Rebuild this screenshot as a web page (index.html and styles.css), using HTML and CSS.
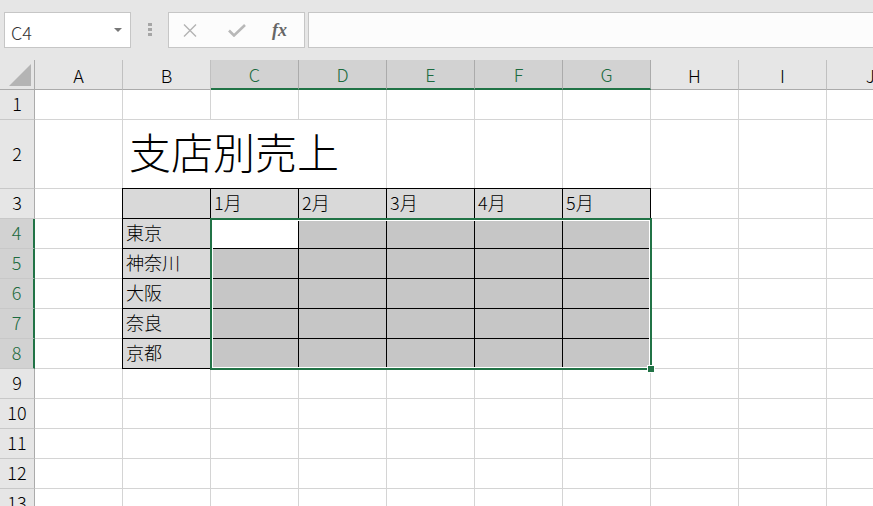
FILE: index.html
```html
<!DOCTYPE html>
<html lang="ja">
<head>
<meta charset="utf-8">
<title>支店別売上 - Excel</title>
<link rel="stylesheet" href="styles.css">
</head>
<body>
	<div class="toolbar">
		<div class="name-box">
			<span class="name">C4</span>
			<span class="dropdown"></span>
		</div>
		<div class="grip"><i></i><i></i><i></i></div>
		<div class="fx-buttons">
			<svg class="btn-cancel" width="14" height="13" viewBox="0 0 14 13">
				<path d="M1 0.5 L13 12.5 M13 0.5 L1 12.5" stroke="#b3b3b3" stroke-width="1.4" fill="none"/>
			</svg>
			<svg class="btn-enter" width="18" height="13" viewBox="0 0 18 13">
				<path d="M1 6.5 L6 11.5 L17 1" stroke="#b8b8b8" stroke-width="2.6" fill="none"/>
			</svg>
			<span class="fx">fx</span>
		</div>
		<div class="formula-input"></div>
	</div>

	<div class="sheet">
		<!-- header row -->
		<div class="corner">
			<svg width="22" height="22" viewBox="0 0 22 22"><path d="M0 22 L22 0 L22 22 Z" fill="#b4b4b4"/></svg>
		</div>
		<div class="col-head">A</div>
		<div class="col-head">B</div>
		<div class="col-head sel">C</div>
		<div class="col-head sel">D</div>
		<div class="col-head sel">E</div>
		<div class="col-head sel">F</div>
		<div class="col-head sel">G</div>
		<div class="col-head">H</div>
		<div class="col-head">I</div>
		<div class="col-head">J</div>

		<!-- row 1 -->
		<div class="row-head">1</div>
		<div class="cell"></div><div class="cell"></div><div class="cell"></div><div class="cell"></div><div class="cell"></div>
		<div class="cell"></div><div class="cell"></div><div class="cell"></div><div class="cell"></div><div class="cell"></div>

		<!-- row 2 -->
		<div class="row-head">2</div>
		<div class="cell"></div>
		<div class="cell title">支店別売上</div>
		<div class="cell"></div><div class="cell"></div><div class="cell"></div><div class="cell"></div><div class="cell"></div><div class="cell"></div>

		<!-- rows 3-8, B:G is the table block -->
		<div class="row-head">3</div>
		<div class="cell"></div><div class="cell"></div><div class="cell"></div><div class="cell"></div>
		<div class="row-head sel">4</div>
		<div class="cell"></div><div class="cell"></div><div class="cell"></div><div class="cell"></div>
		<div class="row-head sel">5</div>
		<div class="cell"></div><div class="cell"></div><div class="cell"></div><div class="cell"></div>
		<div class="row-head sel">6</div>
		<div class="cell"></div><div class="cell"></div><div class="cell"></div><div class="cell"></div>
		<div class="row-head sel">7</div>
		<div class="cell"></div><div class="cell"></div><div class="cell"></div><div class="cell"></div>
		<div class="row-head sel">8</div>
		<div class="cell"></div><div class="cell"></div><div class="cell"></div><div class="cell"></div>

		<div class="range">
			<div class="hd"></div><div class="hd">1月</div><div class="hd">2月</div><div class="hd">3月</div><div class="hd">4月</div><div class="hd">5月</div>
			<div class="hd">東京</div><div class="active"></div><div class="sh"></div><div class="sh"></div><div class="sh"></div><div class="sh"></div>
			<div class="hd">神奈川</div><div class="sh"></div><div class="sh"></div><div class="sh"></div><div class="sh"></div><div class="sh"></div>
			<div class="hd">大阪</div><div class="sh"></div><div class="sh"></div><div class="sh"></div><div class="sh"></div><div class="sh"></div>
			<div class="hd">奈良</div><div class="sh"></div><div class="sh"></div><div class="sh"></div><div class="sh"></div><div class="sh"></div>
			<div class="hd">京都</div><div class="sh"></div><div class="sh"></div><div class="sh"></div><div class="sh"></div><div class="sh"></div>
		</div>

		<!-- rows 9-13 -->
		<div class="row-head">9</div>
		<div class="cell"></div><div class="cell"></div><div class="cell"></div><div class="cell"></div><div class="cell"></div>
		<div class="cell"></div><div class="cell"></div><div class="cell"></div><div class="cell"></div><div class="cell"></div>
		<div class="row-head">10</div>
		<div class="cell"></div><div class="cell"></div><div class="cell"></div><div class="cell"></div><div class="cell"></div>
		<div class="cell"></div><div class="cell"></div><div class="cell"></div><div class="cell"></div><div class="cell"></div>
		<div class="row-head">11</div>
		<div class="cell"></div><div class="cell"></div><div class="cell"></div><div class="cell"></div><div class="cell"></div>
		<div class="cell"></div><div class="cell"></div><div class="cell"></div><div class="cell"></div><div class="cell"></div>
		<div class="row-head">12</div>
		<div class="cell"></div><div class="cell"></div><div class="cell"></div><div class="cell"></div><div class="cell"></div>
		<div class="cell"></div><div class="cell"></div><div class="cell"></div><div class="cell"></div><div class="cell"></div>
		<div class="row-head">13</div>
		<div class="cell"></div><div class="cell"></div><div class="cell"></div><div class="cell"></div><div class="cell"></div>
		<div class="cell"></div><div class="cell"></div><div class="cell"></div><div class="cell"></div><div class="cell"></div>

		<!-- selection frame over C4:G8 -->
		<div class="selection"><div class="handle"></div></div>
	</div>
</body>
</html>
```

FILE: styles.css
```css
body {
	margin: 0;
	width: 873px;
	height: 506px;
	overflow: hidden;
	background-color: #e6e6e6;
	font-family: "Noto Sans CJK JP", "Noto Sans", sans-serif;
	font-weight: 300;
	color: #000;
}

/* formula bar */
.toolbar {
	height: 60px;
	box-sizing: border-box;
	padding: 12px 0 0 4px;
	display: flex;
	align-items: flex-start;
}

.name-box {
	width: 127px;
	height: 36px;
	box-sizing: border-box;
	background-color: #fff;
	border: 1px solid #c6c6c6;
	display: flex;
	align-items: center;
	justify-content: space-between;
	padding: 0 8px 0 6px;
}

.name {
	font-size: 18px;
	line-height: 1;
	color: #333;
	padding-top: 3px;
}

.dropdown {
	width: 0;
	height: 0;
	border-top: 4px solid #777;
	border-left: 4px solid transparent;
	border-right: 4px solid transparent;
}

.grip {
	margin: 11px 0 0 17px;
	width: 4px;
	display: flex;
	flex-direction: column;
	gap: 2px;
}

.grip i {
	display: block;
	width: 4px;
	height: 3px;
	background-color: #a6a6a6;
}

.fx-buttons {
	margin-left: 16px;
	width: 137px;
	height: 36px;
	box-sizing: border-box;
	background-color: #fcfcfc;
	border: 1px solid #c6c6c6;
	display: flex;
	align-items: center;
	padding-left: 14px;
}

.btn-cancel {
	display: block;
}

.btn-enter {
	display: block;
	margin-left: 31px;
}

.fx {
	margin-left: 26px;
	font-family: "Liberation Serif", serif;
	font-style: italic;
	font-weight: bold;
	font-size: 18px;
	color: #666;
	line-height: 1;
}

.formula-input {
	flex: 1;
	margin: 0 -2px 0 3px;
	height: 36px;
	box-sizing: border-box;
	background-color: #fcfcfc;
	border: 1px solid #c6c6c6;
}

/* worksheet */
.sheet {
	position: relative;
	display: grid;
	grid-template-columns: 35px repeat(10, 88px);
	grid-template-rows: 30px 30px 69px;
	grid-auto-rows: 30px;
	width: max-content;
	background-color: #fff;
}

.sheet > div {
	box-sizing: border-box;
}

.corner {
	background-color: #e6e6e6;
	border-right: 1px solid #ababab;
	border-bottom: 1px solid #ababab;
	padding: 4px 0 0 9px;
}

.corner svg {
	display: block;
}

.col-head {
	background-color: #e6e6e6;
	border-right: 1px solid #c0c0c0;
	border-bottom: 1px solid #ababab;
	display: flex;
	align-items: center;
	justify-content: center;
	font-size: 18px;
	line-height: 1;
	color: #000;
}

.col-head.sel {
	background-color: #d2d2d2;
	border-right-color: #ababab;
	border-bottom: 2px solid #217346;
	color: #1d6b40;
}

.row-head {
	background-color: #e6e6e6;
	border-right: 1px solid #ababab;
	border-bottom: 1px solid #c8c8c8;
	display: flex;
	align-items: center;
	justify-content: center;
	padding-bottom: 3px;
	font-size: 18px;
	line-height: 1;
	color: #000;
}

.row-head.sel {
	background-color: #d2d2d2;
	border-right: 2px solid #217346;
	color: #1d6b40;
}

.cell {
	border-right: 1px solid #d4d4d4;
	border-bottom: 1px solid #d4d4d4;
}

.title {
	grid-column: span 3;
	display: flex;
	align-items: center;
	padding: 0 0 6px 6px;
	font-size: 42px;
	line-height: 1;
	color: #000;
	white-space: nowrap;
}

/* bordered table B3:G8 */
.range {
	grid-column: 3 / 9;
	grid-row: 4 / 10;
	margin: -1px 0 0 -1px;
	border-left: 1px solid #000;
	border-top: 1px solid #000;
	display: grid;
	grid-template-columns: repeat(6, 88px);
	grid-template-rows: repeat(6, 30px);
}

.range > div {
	box-sizing: border-box;
	border-right: 1px solid #000;
	border-bottom: 1px solid #000;
	display: flex;
	align-items: center;
	padding: 0 0 3px 3px;
	font-size: 18px;
	line-height: 1;
	color: #000;
}

.hd {
	background-color: #d9d9d9;
}

.sh {
	background-color: #c6c6c6;
}

.active {
	background-color: #fff;
}

.selection {
	position: absolute;
	left: 210px;
	top: 158px;
	width: 442px;
	height: 152px;
	box-sizing: border-box;
	border: 2px solid #217346;
	box-shadow: inset 0 0 0 1px #fff;
	pointer-events: none;
}

.handle {
	position: absolute;
	right: -5px;
	bottom: -5px;
	width: 8px;
	height: 8px;
	box-sizing: border-box;
	background-color: #217346;
	border: 1px solid #fff;
}
```
